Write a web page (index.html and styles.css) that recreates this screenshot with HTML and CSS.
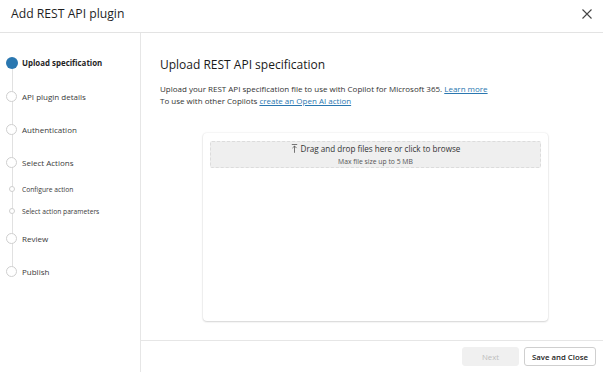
FILE: index.html
```html
<!DOCTYPE html>
<html lang="en">

<head>
    <meta charset="UTF-8">
    <meta name="viewport" content="width=device-width, initial-scale=1.0">
    <title>Add REST API plugin</title>
    <link rel="stylesheet" href="styles.css">
</head>

<body>
    <div class="dialog">
        <div class="dialog-header">
            <h2>Add REST API plugin</h2>
            <button class="close-btn" aria-label="Close">
                <svg width="10" height="10" viewBox="0 0 10 10">
                    <path d="M0.5 0.5 L9.5 9.5 M9.5 0.5 L0.5 9.5" stroke="#444" stroke-width="1.1" fill="none" />
                </svg>
            </button>
        </div>

        <div class="dialog-body">
            <div class="sidebar">
                <ul class="steps">
                    <li class="step active"><span class="dot"></span>Upload specification</li>
                    <li class="step"><span class="dot"></span>API plugin details</li>
                    <li class="step"><span class="dot"></span>Authentication</li>
                    <li class="step step-tight"><span class="dot"></span>Select Actions</li>
                    <li class="step sub"><span class="dot"></span>Configure action</li>
                    <li class="step sub"><span class="dot"></span>Select action parameters</li>
                    <li class="step"><span class="dot"></span>Review</li>
                    <li class="step"><span class="dot"></span>Publish</li>
                </ul>
            </div>

            <div class="main">
                <div class="content">
                    <h3>Upload REST API specification</h3>
                    <p class="intro">
                        Upload your REST API specification file to use with Copilot for Microsoft 365. <a href="#">Learn more</a><br>
                        To use with other Copilots <a href="#">create an Open AI action</a>
                    </p>

                    <div class="upload-card">
                        <div class="dropzone">
                            <div class="drop-title">
                                <svg width="7" height="9" viewBox="0 0 7 9">
                                    <path d="M0.8 0.5 H6.2 M3.5 2 V8.8 M1.4 4.1 L3.5 2 L5.6 4.1" stroke="#555" stroke-width="0.8" fill="none" />
                                </svg>
                                Drag and drop files here or click to browse
                            </div>
                            <div class="drop-note">Max file size up to 5 MB</div>
                        </div>
                    </div>
                </div>

                <div class="footer">
                    <button class="btn btn-disabled" disabled>Next</button>
                    <button class="btn">Save and Close</button>
                </div>
            </div>
        </div>
    </div>
</body>

</html>
```

FILE: styles.css
```css
body {
    margin: 0;
    font-family: "Open Sans", "Noto Sans", Arial, sans-serif;
    color: #242424;
    background: #fff;
}

.dialog {
    width: 603px;
    height: 372px;
    display: flex;
    flex-direction: column;
}

.dialog-header {
    height: 33px;
    border-bottom: 1px solid #e3e3e3;
    display: flex;
    align-items: center;
    justify-content: space-between;
    padding: 0 11px 0 11px;
    box-sizing: border-box;
}

.dialog-header h2 {
    margin: 0 0 5px 0;
    font-size: 12.2px;
    font-weight: 400;
    color: #1f1f1f;
}

.close-btn {
    background: none;
    border: none;
    padding: 0;
    margin: 0 0 5px 0;
    display: flex;
    cursor: pointer;
}

.dialog-body {
    flex: 1;
    display: flex;
}

.sidebar {
    width: 140px;
    border-right: 1px solid #e6e6e6;
}

.steps {
    list-style: none;
    margin: 13px 0 0 0;
    padding: 0;
    position: relative;
}

.steps::before {
    content: "";
    position: absolute;
    left: 11.5px;
    top: 17px;
    bottom: 17px;
    width: 1.5px;
    background: #e1e1e1;
}

.step {
    height: 33px;
    display: flex;
    align-items: center;
    font-size: 8px;
    color: #3a3a3a;
    position: relative;
}

.step:first-child {
    height: 34px;
}

.step-tight {
    height: 32px;
}

.step .dot {
    width: 11px;
    height: 11px;
    border: 1px solid #cfcfcf;
    border-radius: 50%;
    background: #fff;
    margin: 0 5px 0 6px;
    box-sizing: border-box;
    flex-shrink: 0;
}

.step.active {
    font-weight: 700;
    color: #1f1f1f;
    font-size: 7.9px;
}

.step.active .dot {
    width: 12px;
    height: 12px;
    margin-left: 6px;
    margin-right: 4px;
    border: none;
    background: #2a77b0;
}

.step.sub {
    height: 22px;
    font-size: 6.7px;
}

.step.sub .dot {
    width: 6px;
    height: 6px;
    margin: 0 7px 0 9px;
}

.main {
    flex: 1;
    display: flex;
    flex-direction: column;
}

.content {
    flex: 1;
    padding: 23px 20px 0 19px;
}

.content h3 {
    margin: 0 0 10px 0;
    font-size: 12px;
    font-weight: 500;
    color: #1a1a1a;
}

.intro {
    margin: 0;
    font-size: 8px;
    line-height: 12px;
    color: #333;
}

.intro a {
    color: #2a77b0;
    text-decoration: underline;
}

.upload-card {
    width: 345px;
    height: 188px;
    margin: 26px 0 0 43px;
    border-radius: 4px;
    box-shadow: 0 0 2px rgba(0, 0, 0, 0.12), 0 1px 2px rgba(0, 0, 0, 0.14);
    padding: 8px 7px;
    box-sizing: border-box;
}

.dropzone {
    height: 27px;
    background: #efefef;
    border: 1px dashed #dcdcdc;
    border-radius: 2px;
    display: flex;
    flex-direction: column;
    align-items: center;
    padding-top: 1px;
    box-sizing: border-box;
}

.drop-title {
    font-size: 8.1px;
    color: #333;
    line-height: 11px;
    display: flex;
    align-items: center;
    gap: 3px;
}

.drop-note {
    font-size: 6.8px;
    color: #555;
    line-height: 10px;
    margin-top: 3px;
}

.footer {
    height: 31px;
    border-top: 1px solid #e6e6e6;
    display: flex;
    justify-content: flex-end;
    align-items: center;
    gap: 5px;
    padding: 0 7px 0 0;
}

.btn {
    height: 19px;
    padding: 0 7px;
    font-family: inherit;
    font-size: 7.8px;
    font-weight: 600;
    color: #242424;
    background: #fff;
    border: 1px solid #cfcfcf;
    border-radius: 3px;
    cursor: pointer;
}

.btn-disabled {
    width: 57px;
    background: #f0f0f0;
    border-color: #f0f0f0;
    color: #bdbdbd;
    font-weight: 400;
    cursor: default;
}
```
